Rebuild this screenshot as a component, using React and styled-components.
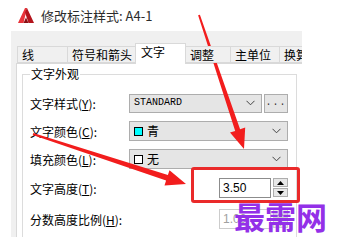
import React from "react";
import styled, { createGlobalStyle } from "styled-components";

const GlobalStyle = createGlobalStyle`
  html, body {
    margin: 0;
    padding: 0;
    background: #fff;
  }
  body {
    font-family: "Noto Sans CJK SC", "Noto Sans", sans-serif;
  }
`;

const Screen = styled.div`
  position: relative;
  width: 347px;
  height: 249px;
  overflow: hidden;
  background: #fff;
`;

const TitleBar = styled.div`
  height: 31px;
  display: flex;
  align-items: center;
  padding-left: 18px;
  gap: 7px;
  box-sizing: border-box;
`;

const Title = styled.span`
  font-size: 13px;
  color: #2b2b2b;
  line-height: 1;
`;

const Dialog = styled.div`
  margin-left: 11px;
  width: 291px;
  height: 206px;
  background: #f0f0f0;
  overflow: hidden;
  padding: 12px 0 0 5px;
  box-sizing: border-box;
`;

const TabRow = styled.div`
  display: flex;
  align-items: flex-end;
  height: 20px;
  padding-left: 1px;
  position: relative;
  z-index: 1;
`;

const Tab = styled.div`
  flex: none;
  width: ${(p) => p.$w}px;
  height: ${(p) => (p.$active ? 21 : 17)}px;
  margin-bottom: ${(p) => (p.$active ? -1 : 0)}px;
  box-sizing: border-box;
  border: 1px solid #d9d9d9;
  border-bottom: ${(p) => (p.$active ? "none" : "1px solid #d9d9d9")};
  margin-left: ${(p) => (p.$first ? 0 : -1)}px;
  background: ${(p) => (p.$active ? "#fff" : "#f0f0f0")};
  font-size: 12px;
  line-height: 15px;
  padding-left: ${(p) => (p.$active ? 5 : 4)}px;
  color: #000;
  white-space: nowrap;
  overflow: hidden;
`;

const Panel = styled.div`
  width: 300px;
  height: 200px;
  background: #fff;
  border: 1px solid #d9d9d9;
  box-sizing: border-box;
  padding: 2px 0 0 5px;
`;

const Group = styled.fieldset`
  margin: 0;
  width: 275px;
  height: 200px;
  box-sizing: border-box;
  border: 1px solid #dcdcdc;
  padding: 11px 0 0 7px;
`;

const Legend = styled.legend`
  padding: 0 1px;
  font-size: 12px;
  line-height: 16px;
  color: #000;
`;

const Row = styled.div`
  display: flex;
  align-items: center;
  height: 20px;
  margin-top: ${(p) => p.$gap || 0}px;
`;

const Label = styled.div`
  width: 99px;
  flex: none;
  font-size: 12px;
  color: #000;
  white-space: nowrap;
  u {
    text-decoration: underline;
    text-underline-offset: 1px;
  }
`;

const Controls = styled.div`
  width: 159px;
  display: flex;
  justify-content: ${(p) => (p.$end ? "flex-end" : "flex-start")};
  align-items: center;
  gap: 2px;
`;

const Combo = styled.div`
  width: ${(p) => p.$w}px;
  height: ${(p) => p.$h || 20}px;
  box-sizing: border-box;
  background: #e5e5e5;
  border: 1px solid #adadad;
  display: flex;
  align-items: center;
  padding: 0 6px 0 4px;
  gap: 4px;
`;

const ComboText = styled.span`
  flex: 1;
  font-size: ${(p) => (p.$mono ? 10 : 12)}px;
  font-family: ${(p) =>
    p.$mono ? '"Liberation Mono", monospace' : '"Noto Sans CJK SC", sans-serif'};
  color: #000;
  line-height: 1;
`;

const Swatch = styled.span`
  width: 9px;
  height: 9px;
  flex: none;
  border: 1px solid #000;
  box-sizing: border-box;
  background: ${(p) => p.$color};
`;

const SmallButton = styled.div`
  width: 24px;
  height: 19px;
  box-sizing: border-box;
  background: #e5e5e5;
  border: 1px solid #adadad;
  font-family: "Liberation Mono", monospace;
  font-size: 10px;
  letter-spacing: 1px;
  text-align: center;
  line-height: 15px;
  color: #333;
`;

const Spinner = styled.div`
  display: flex;
  gap: 2px;
`;

const NumInput = styled.div`
  width: 52px;
  height: 20px;
  box-sizing: border-box;
  border: 1px solid ${(p) => (p.$disabled ? "#cccccc" : "#8c8c8c")};
  background: #fff;
  font-family: "Liberation Sans", Arial, sans-serif;
  font-size: 12px;
  line-height: 18px;
  padding-left: 3px;
  color: ${(p) => (p.$disabled ? "#a0a0a0" : "#000")};
`;

const SpinButtons = styled.div`
  width: 15px;
  display: flex;
  flex-direction: column;
  gap: 1px;
`;

const SpinButton = styled.div`
  height: 9px;
  box-sizing: border-box;
  background: #e8e8e8;
  border: 1px solid ${(p) => (p.$disabled ? "#d0d0d0" : "#adadad")};
  display: flex;
  align-items: center;
  justify-content: center;
`;

const Highlight = styled.div`
  position: absolute;
  left: 191px;
  top: 167px;
  width: 109px;
  height: 36px;
  box-sizing: border-box;
  border: 3px solid #ea2a2a;
  border-radius: 3px;
`;

const Watermark = styled.div`
  position: absolute;
  left: 234px;
  top: 194px;
  font-family: "Noto Sans CJK SC", sans-serif;
  font-weight: 700;
  font-size: 31px;
  line-height: 44px;
  color: #9330e8;
  white-space: nowrap;
`;

const ArrowLayer = styled.svg`
  position: absolute;
  left: 0;
  top: 0;
  pointer-events: none;
`;

const Chevron = () => (
  <svg width="9" height="6" viewBox="0 0 9 6">
    <polyline points="0.5,0.8 4.5,4.8 8.5,0.8" fill="none" stroke="#444" strokeWidth="1" />
  </svg>
);

const Tri = ({ up, disabled }) => (
  <svg width="7" height="4" viewBox="0 0 7 4">
    <polygon
      points={up ? "0,4 3.5,0 7,4" : "0,0 3.5,4 7,0"}
      fill={disabled ? "#b0b0b0" : "#000"}
    />
  </svg>
);

const AppIcon = () => (
  <svg width="16" height="15" viewBox="0 0 16 15">
    <polygon points="0,15 7,0 9,0 5.5,15" fill="#e8333a" />
    <polygon points="9,0 16,15 10.5,15 7,4.5" fill="#b3141c" />
    <polygon points="5.5,15 8,9.5 10.5,15" fill="#8a0d13" />
  </svg>
);

const arrowPoints = (x1, y1, x2, y2, w0, w1, head, headW) => {
  const dx = x2 - x1;
  const dy = y2 - y1;
  const len = Math.hypot(dx, dy);
  const ux = dx / len;
  const uy = dy / len;
  const nx = -uy;
  const ny = ux;
  const bx = x2 - ux * head;
  const by = y2 - uy * head;
  return [
    [x1 + nx * w0, y1 + ny * w0],
    [bx + nx * w1, by + ny * w1],
    [bx + nx * headW, by + ny * headW],
    [x2, y2],
    [bx - nx * headW, by - ny * headW],
    [bx - nx * w1, by - ny * w1],
    [x1 - nx * w0, y1 - ny * w0],
  ]
    .map((p) => p.map((v) => v.toFixed(1)).join(","))
    .join(" ");
};

const arrows = [
  [199, 15, 244, 149, 1, 2.6, 20, 8],
  [33, 134, 186, 184, 1, 3, 20, 8],
];

const tabs = [
  { label: "线", w: 51 },
  { label: "符号和箭头", w: 69 },
  { label: "文字", w: 51, active: true },
  { label: "调整", w: 46 },
  { label: "主单位", w: 50 },
  { label: "换算单位", w: 50 },
];

const App = () => {
  return (
    <>
      <GlobalStyle />
      <Screen>
        <TitleBar>
          <AppIcon />
          <Title>修改标注样式: A4-1</Title>
        </TitleBar>

        <Dialog>
          <TabRow>
            {tabs.map((t, i) => (
              <Tab key={t.label} $w={t.w} $active={t.active} $first={i === 0}>
                {t.label}
              </Tab>
            ))}
          </TabRow>
          <Panel>
            <Group>
              <Legend>文字外观</Legend>

              <Row>
                <Label>
                  文字样式(<u>Y</u>):
                </Label>
                <Controls>
                  <Combo $w={134} $h={19}>
                    <ComboText $mono>STANDARD</ComboText>
                    <Chevron />
                  </Combo>
                  <SmallButton>...</SmallButton>
                </Controls>
              </Row>

              <Row $gap={8}>
                <Label>
                  文字颜色(<u>C</u>):
                </Label>
                <Controls>
                  <Combo $w={159}>
                    <Swatch $color="#00ffff" />
                    <ComboText>青</ComboText>
                    <Chevron />
                  </Combo>
                </Controls>
              </Row>

              <Row $gap={8}>
                <Label>
                  填充颜色(<u>L</u>):
                </Label>
                <Controls>
                  <Combo $w={159}>
                    <Swatch $color="#ffffff" />
                    <ComboText>无</ComboText>
                    <Chevron />
                  </Combo>
                </Controls>
              </Row>

              <Row $gap={9}>
                <Label>
                  文字高度(<u>T</u>):
                </Label>
                <Controls $end>
                  <Spinner>
                    <NumInput>3.50</NumInput>
                    <SpinButtons>
                      <SpinButton><Tri up /></SpinButton>
                      <SpinButton><Tri /></SpinButton>
                    </SpinButtons>
                  </Spinner>
                </Controls>
              </Row>

              <Row $gap={11}>
                <Label>
                  分数高度比例(<u>H</u>):
                </Label>
                <Controls $end>
                  <Spinner>
                    <NumInput $disabled>1.00</NumInput>
                    <SpinButtons>
                      <SpinButton $disabled><Tri up disabled /></SpinButton>
                      <SpinButton $disabled><Tri disabled /></SpinButton>
                    </SpinButtons>
                  </Spinner>
                </Controls>
              </Row>
            </Group>
          </Panel>
        </Dialog>

        <Highlight />
        <Watermark>最需网</Watermark>
        <ArrowLayer width="347" height="249" viewBox="0 0 347 249">
          {arrows.map((a, i) => (
            <polygon key={i} points={arrowPoints(...a)} fill="#f21d1d" />
          ))}
        </ArrowLayer>
      </Screen>
    </>
  );
};

export default App;
